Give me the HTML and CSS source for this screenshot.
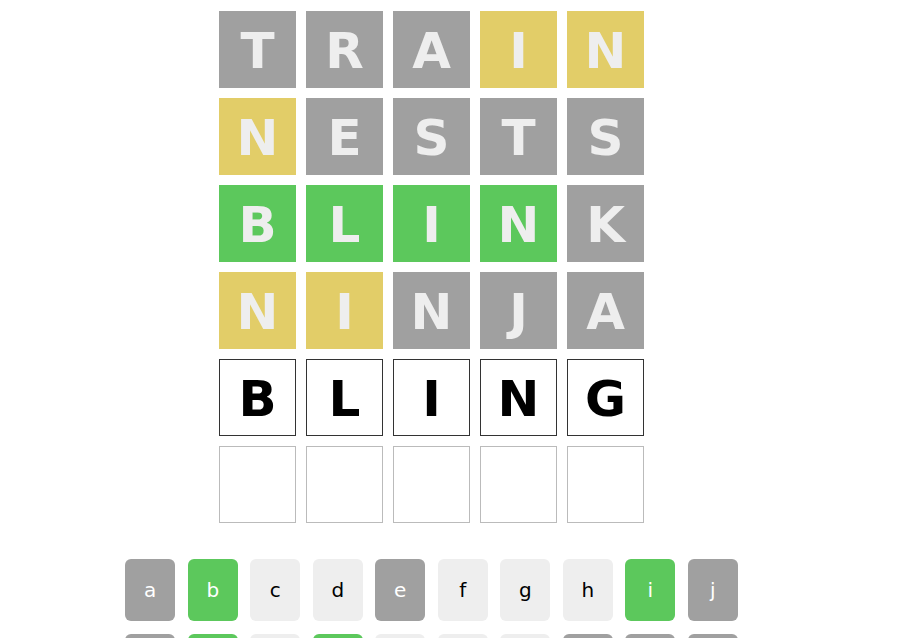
FILE: index.html
```html
<!DOCTYPE html>
<html>
<head>
<meta charset="utf-8">
<link rel="stylesheet" href="styles.css">
</head>
<body>
<div class="app">
  <div class="board">
    <div class="row"><div class="tile gray">T</div><div class="tile gray">R</div><div class="tile gray">A</div><div class="tile yellow">I</div><div class="tile yellow">N</div></div>
    <div class="row"><div class="tile yellow">N</div><div class="tile gray">E</div><div class="tile gray">S</div><div class="tile gray">T</div><div class="tile gray">S</div></div>
    <div class="row"><div class="tile green">B</div><div class="tile green">L</div><div class="tile green">I</div><div class="tile green">N</div><div class="tile gray">K</div></div>
    <div class="row"><div class="tile yellow">N</div><div class="tile yellow">I</div><div class="tile gray">N</div><div class="tile gray">J</div><div class="tile gray">A</div></div>
    <div class="row"><div class="tile current">B</div><div class="tile current">L</div><div class="tile current">I</div><div class="tile current">N</div><div class="tile current">G</div></div>
    <div class="row"><div class="tile empty"></div><div class="tile empty"></div><div class="tile empty"></div><div class="tile empty"></div><div class="tile empty"></div></div>
  </div>
  <div class="keyboard">
    <div class="krow">
      <div class="key kgray">a</div><div class="key kgreen">b</div><div class="key">c</div><div class="key">d</div><div class="key kgray">e</div><div class="key">f</div><div class="key">g</div><div class="key">h</div><div class="key kgreen">i</div><div class="key kgray">j</div>
    </div>
    <div class="krow">
      <div class="key kgray">k</div><div class="key kgreen">l</div><div class="key">m</div><div class="key kgreen">n</div><div class="key">o</div><div class="key">p</div><div class="key">q</div><div class="key kgray">r</div><div class="key kgray">s</div><div class="key kgray">t</div>
    </div>
  </div>
</div>
</body>
</html>
```
FILE: styles.css
```css
html, body {
  margin: 0;
  padding: 0;
  background: #fff;
}
body {
  font-family: "DejaVu Sans", Verdana, sans-serif;
}
.app {
  width: 863px;
  margin: 0 auto 0 0;
  display: flex;
  flex-direction: column;
  align-items: center;
  padding-top: 11px;
}
.board {
  display: flex;
  flex-direction: column;
  gap: 10px;
}
.row {
  display: flex;
  gap: 10px;
}
.tile {
  width: 77px;
  height: 77px;
  box-sizing: border-box;
  display: flex;
  align-items: center;
  justify-content: center;
  font-weight: bold;
  font-size: 50px;
  padding-top: 3px;
  color: #eeeeee;
}
.gray { background: #a0a0a0; }
.yellow { background: #e2cd68; }
.green { background: #5cc85c; }
.current {
  border: 1px solid #333;
  color: #000;
  background: #fff;
}
.empty {
  border: 1px solid #bbb;
  background: #fff;
}
.keyboard {
  margin-top: 36px;
  display: flex;
  flex-direction: column;
  gap: 13px;
}
.krow {
  display: flex;
  gap: 12.5px;
}
.key {
  width: 50px;
  height: 62px;
  border-radius: 6px;
  background: #eeeeee;
  color: #000;
  display: flex;
  align-items: center;
  justify-content: center;
  font-size: 20px;
  font-family: "DejaVu Sans", Verdana, sans-serif;
}
.kgray { background: #a0a0a0; color: #fff; }
.kgreen { background: #5cc85c; color: #fff; }
```
